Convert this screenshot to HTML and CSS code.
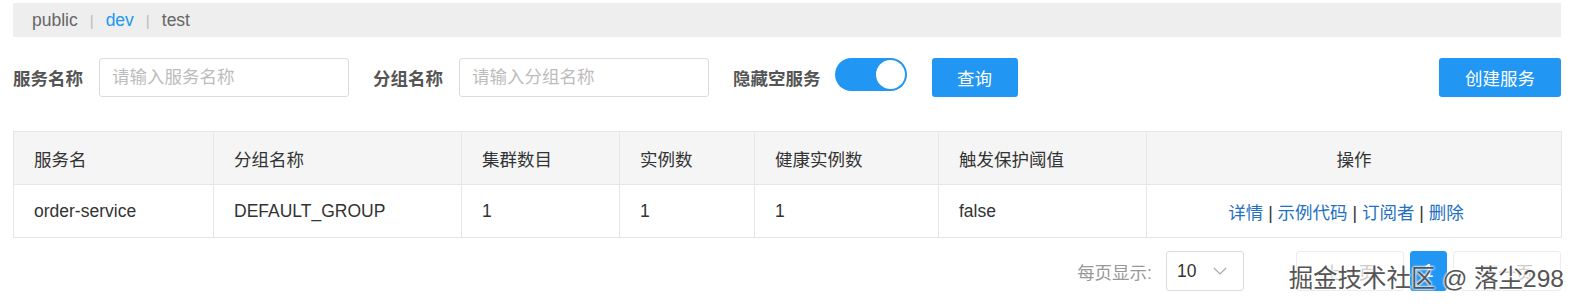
FILE: index.html
```html
<!DOCTYPE html>
<html>
<head>
  <title>服务列表</title>
  <link rel="stylesheet" href="styles.css">
</head>
<body>
<div class="page">
  <div class="ns-bar">
    <span class="ns">public</span><span class="ns-sep">|</span><span class="ns active">dev</span><span class="ns-sep">|</span><span class="ns">test</span>
  </div>

  <div class="search-row">
    <label class="field-label">服务名称</label>
    <input class="field-input" type="text" placeholder="请输入服务名称">
    <label class="field-label second">分组名称</label>
    <input class="field-input" type="text" placeholder="请输入分组名称">
    <label class="field-label second tight">隐藏空服务</label>
    <div class="switch on"><div class="knob"></div></div>
    <button class="btn btn-query">查询</button>
    <button class="btn btn-create">创建服务</button>
  </div>

  <table class="service-table">
    <colgroup>
      <col style="width:200px">
      <col style="width:248px">
      <col style="width:158px">
      <col style="width:135px">
      <col style="width:184px">
      <col style="width:208px">
      <col style="width:415px">
    </colgroup>
    <thead>
      <tr>
        <th>服务名</th>
        <th>分组名称</th>
        <th>集群数目</th>
        <th>实例数</th>
        <th>健康实例数</th>
        <th>触发保护阈值</th>
        <th class="center">操作</th>
      </tr>
    </thead>
    <tbody>
      <tr>
        <td>order-service</td>
        <td>DEFAULT_GROUP</td>
        <td>1</td>
        <td>1</td>
        <td>1</td>
        <td>false</td>
        <td class="center ops">
          <a href="#">详情</a> | <a href="#">示例代码</a> | <a href="#">订阅者</a> | <a href="#">删除</a>
        </td>
      </tr>
    </tbody>
  </table>

  <div class="pager">
    <span class="pager-label">每页显示:</span>
    <div class="page-size">
      <span>10</span>
      <svg width="14" height="8" viewBox="0 0 14 8"><path d="M1 1 L7 7 L13 1" fill="none" stroke="#aaa" stroke-width="1.2"/></svg>
    </div>
    <button class="page-btn wide" disabled>上一页</button>
    <button class="page-btn current">1</button>
    <button class="page-btn wide" disabled>下一页</button>
  </div>

  <div class="watermark">掘金技术社区 @ 落尘298</div>
</div>
</body>
</html>
```

FILE: styles.css
```css
body {
  margin: 0;
  font-family: "Liberation Sans", "Noto Sans CJK SC", sans-serif;
  font-size: 17.5px;
  color: #333;
  background: #fff;
}
.page {
  position: relative;
  width: 1548px;
  height: 304px;
  padding: 3px 15px 0 13px;
  overflow: hidden;
}
.ns-bar {
  height: 34px;
  background: #eeeeee;
  display: flex;
  align-items: center;
  padding-left: 19px;
  color: #666;
}
.ns-sep {
  color: #bbb;
  margin: 0 12px;
  font-size: 15px;
}
.ns.active {
  color: #2196f3;
}
.search-row {
  display: flex;
  align-items: center;
  margin-top: 21px;
  height: 39px;
}
.field-label {
  font-weight: bold;
  color: #555;
  margin-right: 16px;
}
.field-label.second {
  margin-left: 24px;
}
.field-label.tight {
  margin-right: 14px;
}
.field-input {
  box-sizing: border-box;
  width: 250px;
  height: 39px;
  border: 1px solid #dcdcdc;
  border-radius: 3px;
  padding: 0 12px;
  font-family: inherit;
  font-size: 17.5px;
  color: #333;
  outline: none;
}
.field-input::placeholder {
  color: #bcbcbc;
}
.switch {
  box-sizing: border-box;
  width: 72px;
  height: 33px;
  border-radius: 17px;
  background: #2196f3;
  position: relative;
  margin-top: -6px;
}
.switch .knob {
  position: absolute;
  top: 2px;
  right: 2px;
  width: 29px;
  height: 29px;
  border-radius: 50%;
  background: #fff;
}
.btn {
  height: 39px;
  border: none;
  border-radius: 3px;
  background: #2196f3;
  color: #fff;
  font-family: inherit;
  font-size: 17.5px;
  cursor: pointer;
}
.btn-query {
  width: 86px;
  margin-left: 25px;
}
.btn-create {
  width: 122px;
  margin-left: auto;
}
.service-table {
  margin-top: 34px;
  width: 1548px;
  border-collapse: collapse;
  table-layout: fixed;
}
.service-table th,
.service-table td {
  border: 1px solid #e6e6e6;
  height: 53px;
  padding: 0 20px;
  text-align: left;
  font-weight: normal;
  color: #333;
  box-sizing: border-box;
}
.service-table th {
  background: #f5f5f5;
}
.service-table .center {
  text-align: center;
}
.ops {
  color: #444;
  padding-right: 36px !important;
}
.ops a {
  color: #2470c0;
  text-decoration: none;
}
.pager {
  display: flex;
  align-items: center;
  justify-content: flex-end;
  margin-top: 13px;
  height: 40px;
}
.pager-label {
  color: #999;
  margin-right: 14px;
}
.page-size {
  box-sizing: border-box;
  width: 78px;
  height: 40px;
  border: 1px solid #dcdcdc;
  border-radius: 3px;
  display: flex;
  align-items: center;
  justify-content: space-between;
  padding: 0 16px 0 10px;
  color: #333;
  margin-right: 46px;
}
.page-btn {
  box-sizing: border-box;
  height: 40px;
  border: 1px solid #ececec;
  border-radius: 3px;
  background: #fff;
  color: #ccc;
  font-family: inherit;
  font-size: 17.5px;
  margin-left: 6px;
}
.page-btn.wide {
  width: 108px;
}
.page-btn.current {
  width: 37px;
  background: #2196f3;
  border-color: #2196f3;
  color: #fff;
}
.watermark {
  position: absolute;
  right: 12px;
  top: 259px;
  font-size: 24.5px;
  color: #555;
  text-shadow: 0 0 2px #fff, 0 0 2px #fff, 0 0 3px #fff;
  white-space: nowrap;
}
```
